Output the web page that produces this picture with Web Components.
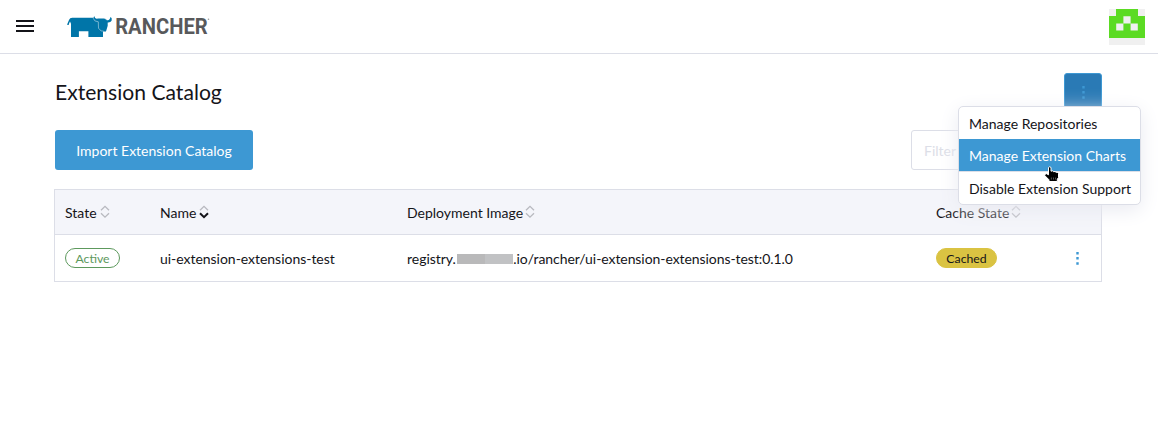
<!DOCTYPE html>
<html lang="en"><head><meta charset="utf-8"><title>Extension Catalog</title>
<style>html,body{margin:0;height:100%}body{background:#fff;color:#141419;font:14px/20px Lato,sans-serif;overflow:hidden}</style></head>
<body><extension-page></extension-page>
<script>
const define=(name,html)=>customElements.define(name,class extends HTMLElement{
  constructor(){super();const t=document.createElement('template');t.innerHTML=html;this.attachShadow({mode:'open'}).append(t.content.cloneNode(true));}
});
define('brand-logo',`<style>:host{display:block;width:146px;height:26px}svg{display:block}</style>
<svg width="146" height="26" viewBox="67 14 146 26">
<path fill="#0075a8" d="M67 24.8L69 20Q69.8 17.8 72.2 17.8H93.6L94.1 16L95.2 18Q96 19 98 18.6H104Q106.5 18.8 107 20.2Q109.8 20.8 110.6 16.8Q112.4 18.4 111.6 20.8Q110.6 22.6 107.7 22.4V25.8L106 31.5H103V37H88.4V31.2H78.9V37H71V23.8L70 21.5Q69 23.2 68.7 25Z"/>
<path fill="none" stroke="#fff" stroke-opacity=".75" stroke-width=".6" d="M93.2 18.2Q94 21.8 98.3 21.8L98.5 28.2L101.2 31H103.5M104.8 18.6L107 20"/>
<text x="115.2" y="34.2" font-family="Roboto" font-weight="700" font-size="21.5" fill="#58595b" textLength="92.5" lengthAdjust="spacingAndGlyphs">RANCHER</text>
<circle cx="208.5" cy="19.3" r=".8" fill="#999"/></svg>`);
define('user-avatar',`<style>:host{display:block;width:36px;height:36px}svg{display:block}</style>
<svg width="36" height="36"><path fill="#f0f0f0" d="M0 0h36v36H0z"/><path fill="#5bdb23" d="M7 0h22v7h7v22H0V7h7z"/><path fill="#f0f0f0" d="M14.4 7.2h7.2v7.2h-7.2zM7.2 14.4h7.2v7.2H7.2zM21.6 14.4h7.2v7.2h-7.2z"/></svg>`);
define('app-header',`<style>:host{display:flex;height:53px;border-bottom:1px solid #dcdee7;padding:0 13px 0 16px;box-sizing:content-box;width:1129px}.menu{margin-top:20px}brand-logo{margin:14px 0 0 33px}user-avatar{margin:9px 0 0 auto}.menu{display:block;width:18px;height:12px}</style>
<svg class="menu"><path fill="#141419" d="M0 0h18v2H0zM0 5h18v2H0zM0 10h18v2H0z"/></svg><brand-logo></brand-logo><user-avatar></user-avatar>`);
define('primary-button',`<style>:host{display:flex;align-items:center;justify-content:center;width:198px;height:40px;background:#3d98d3;color:#fff;border-radius:3px;padding-top:2px;box-sizing:border-box}</style><slot></slot>`);
define('kebab-icon',`<style>:host{display:block;width:3px;height:13px;color:#3d98d3}svg{display:block}</style><svg width="3" height="13"><path fill="currentColor" d="M.3 0h2.4v2.4H.3zM.3 5.1h2.4v2.4H.3zM.3 10.3h2.4v2.4H.3z"/></svg>`);
define('filter-input',`<style>:host{display:block;box-sizing:border-box;width:191px;height:40px;border:1px solid #dcdee7;border-radius:3px;padding:10px 12px;color:#dcdee7}</style><slot></slot>`);
define('sort-icon',`<style>:host{display:inline-block;width:10px;height:14px}:host([down]){--down:#141419;--w:2}svg{display:block}path{fill:none;stroke:#b8b9bf;stroke-width:1.3}.d{stroke:var(--down,#b8b9bf);stroke-width:var(--w,1.3)}</style><svg width="10" height="14"><path d="M1 5.3L5 1.3L9 5.3"/><path class="d" d="M1 8.2L5 12.2L9 8.2"/></svg>`);
define('column-title',`<style>:host{display:flex;align-items:center;gap:2px;padding-top:1px}sort-icon,::slotted(sort-icon){margin-top:-2px}</style><slot></slot><slot name="sort"><sort-icon></sort-icon></slot>`);
define('state-badge',`<style>:host{display:inline-flex;align-items:center;justify-content:center;box-sizing:border-box;height:20px;border:1px solid #5d995d;border-radius:10px;padding:2px 10px 0;color:#5d995d;font-size:12.25px;width:55px}:host([cached]){background:#dac342;border-color:#dac342;color:#141419;width:61px}</style><slot></slot>`);
define('redacted-host',`<style>:host{display:inline-block;width:56px;height:10px;margin:0 .5px 0 1px;background:linear-gradient(90deg,#b9b9ba 50%,#c1c2c4 50%);vertical-align:0}</style>`);
define('catalog-table',`<style>:host{display:block;border:1px solid #dcdee7;width:1046px;height:91px}.row{display:grid;grid-template-columns:95px 247px 529px 132px 1fr;align-items:center;padding-left:10px;height:46px}.head{height:44px;background:#f4f5fa;border-bottom:1px solid #dcdee7}.name{padding-top:2px;letter-spacing:-.03px}.tail{letter-spacing:-.07px}kebab-icon{margin-left:8px}.wide{gap:3px}</style>
<div class="row head"><column-title class="wide">State</column-title><column-title class="wide">Name<sort-icon slot="sort" down></sort-icon></column-title><column-title>Deployment Image</column-title><column-title>Cache State</column-title></div>
<div class="row"><state-badge>Active</state-badge><span class="name">ui-extension-extensions-test</span><span class="name">registry.<redacted-host></redacted-host><span class="tail">.io/rancher/ui-extension-extensions-test:0.1.0</span></span><state-badge cached>Cached</state-badge><kebab-icon></kebab-icon></div>`);
define('hand-cursor',`<style>:host{display:block;width:17px;height:17px}svg{display:block}</style><svg width="17" height="17" viewBox="0 0 17 17"><path d="M4.5 1.5Q5.8 0 7 1.5V5.2L8.5 4.8L9.8 5.8L11 5.4L12.2 6.4L13.2 6.2L14.5 7.5V11.5L13.3 13.2V15.5H5V13.8L.8 9.6Q.5 7.7 2.5 7.7L4.5 8.8Z" fill="#000" stroke="#fff"/><path d="M7.4 11.5v2M9.5 11.5v2M11.6 11.5v2" stroke="#777" stroke-width=".7"/></svg>`);
define('menu-item',`<style>:host{display:block;height:32px;box-sizing:border-box;padding:7px 10px 0;white-space:nowrap}:host([active]){background:#3d98d3;color:#fff}</style><slot></slot>`);
define('action-menu',`<style>:host{display:block;box-sizing:border-box;width:183px;height:99px;border:1px solid #dcdee7;border-radius:5px;background:#fff;box-shadow:0 5px 20px #e9eaf1}hr{margin:0;border:0;border-top:1px solid #dcdee7}hand-cursor{position:absolute;left:85px;top:59px}</style><menu-item>Manage Repositories</menu-item><menu-item active>Manage Extension Charts</menu-item><hr><menu-item>Disable Extension Support</menu-item><hand-cursor></hand-cursor>`);
define('action-button',`<style>:host{display:flex;position:relative;box-sizing:border-box;width:38px;height:40px;border:1px solid #3d98d3;border-radius:3px;background:#2a7ab5;justify-content:center;padding:12px 0 0 0}action-menu{position:absolute;right:-40px;top:32px}</style><kebab-icon></kebab-icon><action-menu></action-menu>`);
define('extension-page',`<style>:host{display:block}main{padding:19px 0 0 54px;width:1048px}.title{display:flex;justify-content:space-between;height:57px;padding-left:1px;position:relative;z-index:2}h1{font:400 21.1px/26px Lato,sans-serif;margin:6px 0 0}.tools{display:flex;justify-content:space-between;padding-left:1px;height:59px}</style>
<app-header></app-header><main><div class="title"><h1>Extension Catalog</h1><action-button></action-button></div><div class="tools"><primary-button>Import Extension Catalog</primary-button><filter-input>Filter</filter-input></div><catalog-table></catalog-table></main>`);
</script></body></html>
